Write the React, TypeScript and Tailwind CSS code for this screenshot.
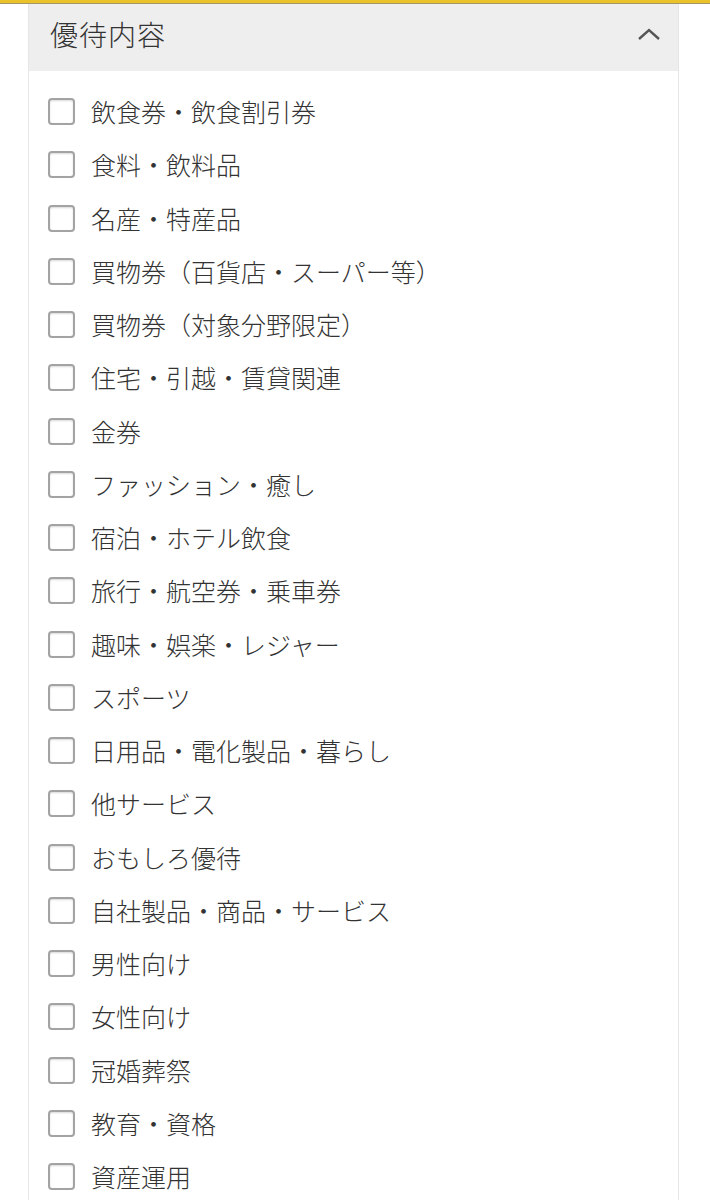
const items = [
  "飲食券・飲食割引券",
  "食料・飲料品",
  "名産・特産品",
  "買物券（百貨店・スーパー等）",
  "買物券（対象分野限定）",
  "住宅・引越・賃貸関連",
  "金券",
  "ファッション・癒し",
  "宿泊・ホテル飲食",
  "旅行・航空券・乗車券",
  "趣味・娯楽・レジャー",
  "スポーツ",
  "日用品・電化製品・暮らし",
  "他サービス",
  "おもしろ優待",
  "自社製品・商品・サービス",
  "男性向け",
  "女性向け",
  "冠婚葬祭",
  "教育・資格",
  "資産運用",
];

const App = () => {
  return (
    <div
      className="w-[710px] h-[1200px] overflow-hidden bg-white text-[#333]"
      style={{ fontFamily: '"Noto Sans CJK JP", "Noto Sans", sans-serif' }}
    >
      {/* top bar */}
      <div className="h-[3px] bg-[#e9c22c]" />
      <div className="h-[1px] bg-[#a39660]" />

      <div className="ml-[28px] w-[651px] border-x border-[#e6e6e6]">
        {/* header */}
        <div className="h-[67px] bg-[#eeeeee] flex items-center justify-between pl-[21px] pr-[17px] pb-[8px]">
          <span className="text-[28px] tracking-[1px] leading-none font-light">優待内容</span>
          <svg width="24" height="14" viewBox="0 0 24 14">
            <polyline points="2,12 12,3 22,12" fill="none" stroke="#555" strokeWidth="2.4" />
          </svg>
        </div>

        {/* options */}
        <div className="pt-[14px] pl-[19px] flex flex-col">
          {items.map((label) => (
            <label key={label} className="h-[53.25px] flex items-center gap-[16px] cursor-pointer">
              <span className="w-[27px] h-[27px] rounded-[4px] border-2 border-[#a3a3a3] bg-white shadow-[inset_0_1px_2px_rgba(0,0,0,0.15)] shrink-0" />
              <span className="text-[25px] leading-none font-light">{label}</span>
            </label>
          ))}
        </div>
      </div>
    </div>
  );
};

export default App;
